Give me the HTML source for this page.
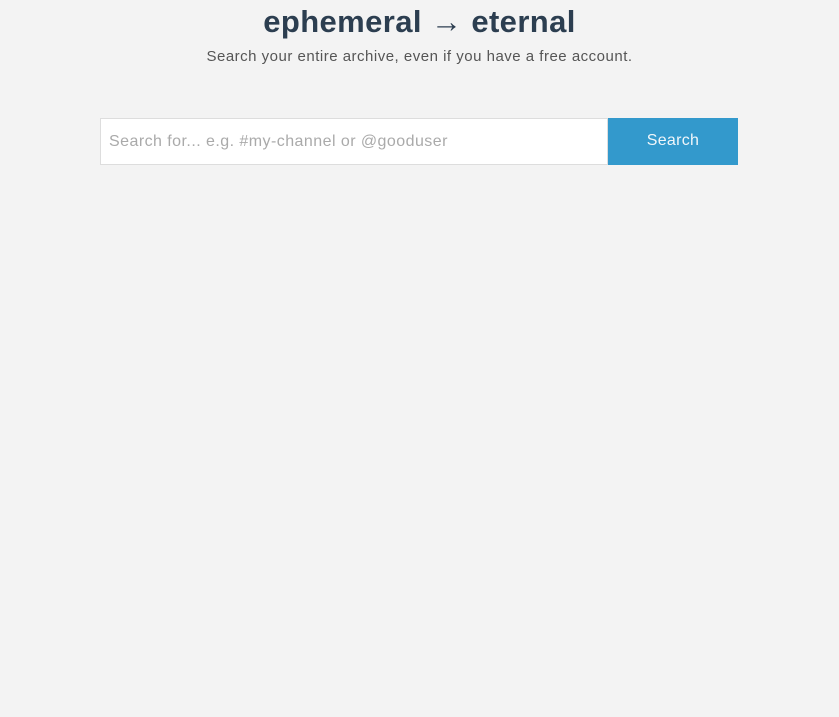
<!DOCTYPE html>
<html><head><style>
body{margin:0;background:#f3f3f3;width:839px;height:717px;overflow:hidden;font-family:"Liberation Sans",sans-serif;}
h1{position:absolute;left:0;width:839px;top:4px;margin:0;text-align:center;font-size:31px;font-weight:bold;color:#2c3e50;letter-spacing:0.4px;}
p{position:absolute;left:0;width:839px;top:48px;margin:0;text-align:center;font-size:15px;color:#555;letter-spacing:0.5px;}
.in{position:absolute;left:100px;top:118px;width:506px;height:45px;background:#fff;border:1px solid #ddd;}
.in span{position:absolute;left:8px;top:14px;font-size:16px;color:#aaa;letter-spacing:0.45px;}
.btn{position:absolute;left:608px;top:118px;width:130px;height:47px;background:#3399cc;color:#f0f6fa;font-size:16px;text-align:center;line-height:46px;letter-spacing:0.3px;}
</style></head><body>
<h1>ephemeral → eternal</h1>
<p>Search your entire archive, even if you have a free account.</p>
<div class="in"><span>Search for... e.g. #my-channel or @gooduser</span></div>
<div class="btn">Search</div>
</body></html>
